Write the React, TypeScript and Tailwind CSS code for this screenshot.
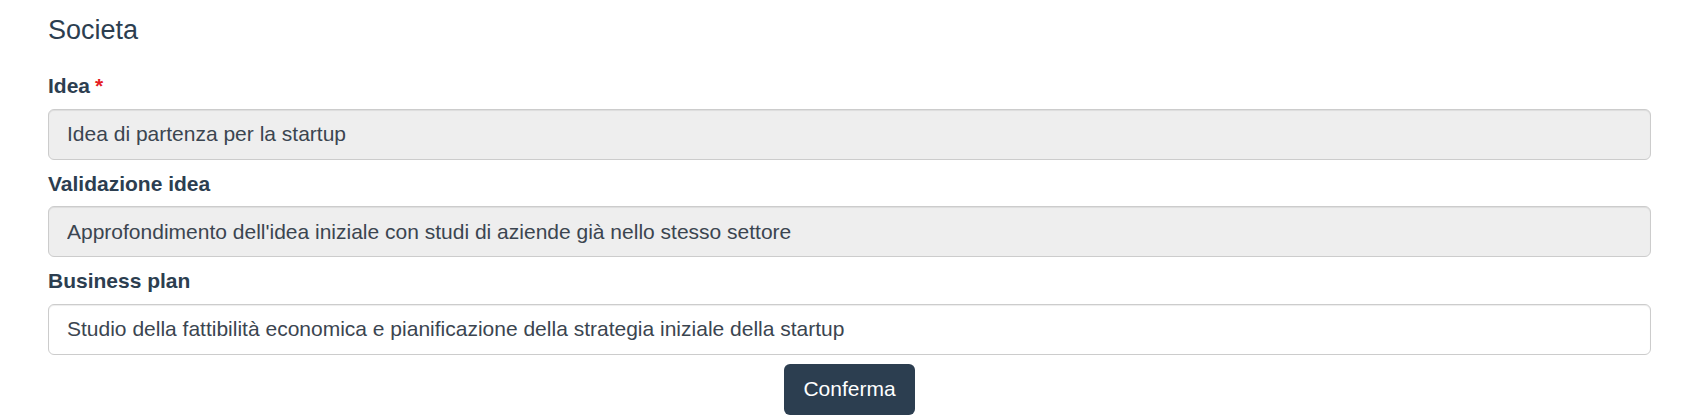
import React from "react";

const fields = [
  {
    label: "Idea",
    required: true,
    value: "Idea di partenza per la startup",
    disabled: true,
  },
  {
    label: "Validazione idea",
    required: false,
    value:
      "Approfondimento dell'idea iniziale con studi di aziende già nello stesso settore",
    disabled: true,
  },
  {
    label: "Business plan",
    required: false,
    value:
      "Studio della fattibilità economica e pianificazione della strategia iniziale della startup",
    disabled: false,
  },
];

export default function App() {
  return (
    <div className="min-h-screen bg-white font-['Liberation_Sans',Arial,sans-serif] text-[#2c3e50]">
      <div className="ml-[48px] mr-[30px] pt-[15px]">
        <h4 className="text-[27px] leading-[30px] mb-[26px]">Societa</h4>
        <form className="flex flex-col gap-[9px]">
          {fields.map((f) => (
            <div key={f.label} className="flex flex-col">
              <label className="text-[21px] leading-[30px] font-bold mb-[7.5px]">
                {f.label}
                {f.required && <span className="text-[#e51c23] ml-[5px]">*</span>}
              </label>
              <input
                type="text"
                readOnly
                defaultValue={f.value}
                className={
                  "h-[51px] w-full rounded-[6px] border border-[#cccccc] px-[18px] text-[21px] leading-[30px] text-[#3b4550] shadow-[inset_0_1px_1px_rgba(0,0,0,0.075)] focus:outline-none " +
                  (f.disabled ? "bg-[#eeeeee]" : "bg-white")
                }
              />
            </div>
          ))}
        </form>
        <div className="flex justify-center mt-[9px]">
          <button
            type="button"
            className="h-[51px] px-[19px] rounded-[6px] bg-[#2c3e50] text-white text-[21px] leading-[30px]"
          >
            Conferma
          </button>
        </div>
      </div>
    </div>
  );
}
